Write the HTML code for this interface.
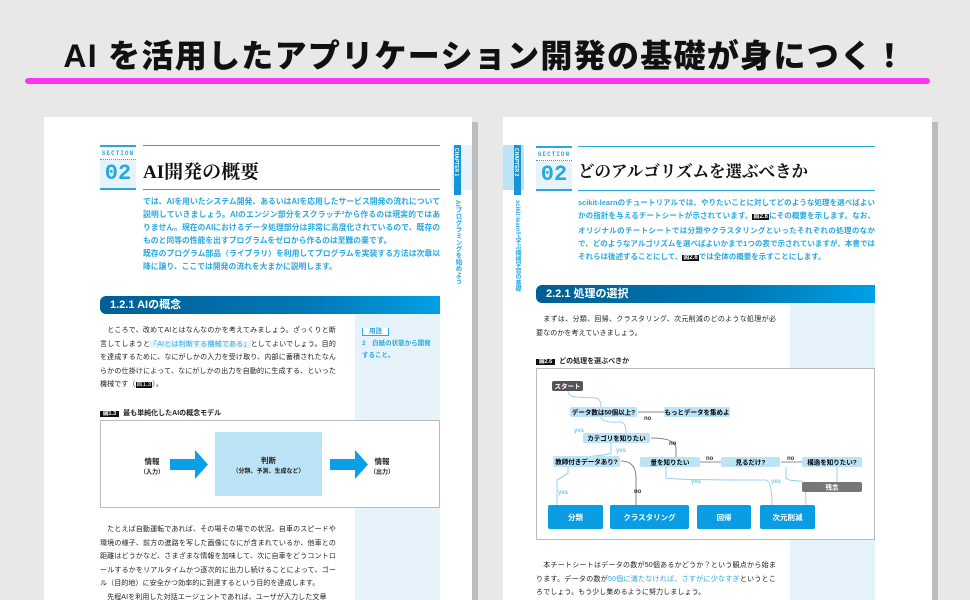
<!DOCTYPE html>
<html><head><meta charset="utf-8"><style>
*{margin:0;padding:0;box-sizing:border-box}
html,body{width:970px;height:600px;overflow:hidden}
body{background:#e8e8e8;position:relative;font-family:"Liberation Sans","Noto Sans CJK JP",sans-serif;color:#222}
.a{position:absolute}
.hd{left:0;top:36px;width:970px;text-align:center;font-size:32px;font-weight:900;letter-spacing:1.3px;color:#111;white-space:nowrap;line-height:40px}
.pink{height:6px;background:#ff33ee;border-radius:3px}
.page{background:#fff;top:117px;height:483px}
.shadow{background:#bcbcbc;top:122px;height:478px;width:6px}
.sec{width:36px;height:45px;border-top:2px solid #29a8e0;border-bottom:2px solid #29a8e0;background:#e6f3fb;text-align:center;color:#29a8e0}
.sec .s{font-size:6px;font-weight:bold;letter-spacing:1px;background:#fff;height:13px;line-height:13px;border-bottom:1px dotted #29a8e0;font-family:"Liberation Mono",monospace}
.sec .n{font-size:22px;font-weight:bold;font-family:"Liberation Mono",monospace;line-height:28px}
.tline{border-top:1.5px solid #29a8e0;border-bottom:1.5px solid #29a8e0;height:45px}
.title{font-family:"Liberation Serif","Noto Serif CJK SC",serif;font-weight:bold;color:#111}
.lead{color:#29a8e0;font-size:7.8px;font-weight:bold;line-height:13px;text-align:justify}
.bar{height:18px;background:linear-gradient(90deg,#005f94,#0077b5 60%,#00a0e6);color:#fff;font-weight:bold;font-size:11px;line-height:18px;padding-left:10px;border-radius:6px 0 0 6px}
.side{background:#e6f3fb}
.body{font-size:7px;line-height:13.5px;color:#222;text-align:justify;letter-spacing:0.1px}
.cap{font-size:7px;font-weight:bold}
.cap b{background:#111;color:#fff;font-size:5.5px;padding:0 3px;margin-right:4px}
.vt{writing-mode:vertical-rl;font-size:6.5px;color:#29a8e0;font-weight:bold}
.hl{background:#e6f3fb;color:#29a8e0}
.ref{background:#111;color:#fff;font-size:6px;padding:0 1px}
</style></head><body>
<div class="a pink" style="left:25px;width:905px;top:78px"></div>
<div class="a hd">AI を活用したアプリケーション開発の基礎が身につく！</div>

<!-- LEFT PAGE -->
<div class="a page" style="left:44px;width:428px"></div>
<div class="a shadow" style="left:472px"></div>
<div class="a sec" style="left:100px;top:145px"><div class="s">SECTION</div><div class="n">02</div></div>
<div class="a tline" style="left:143px;top:145px;width:297px"></div>
<div class="a title" style="left:143px;top:157px;font-size:19px">AI開発の概要</div>
<div class="a side" style="left:452px;top:145px;width:20px;height:45px"></div>
<div class="a" style="left:454px;top:145px;width:7px;height:50px;background:#1595d8"></div>
<div class="a vt" style="left:453px;top:148px;color:#fff;font-size:5px">CHAPTER 1</div>
<div class="a vt" style="left:452px;top:200px">AIプログラミングを始めよう</div>
<div class="a lead" style="left:143px;top:195px;width:297px">では、AIを用いたシステム開発、あるいはAIを応用したサービス開発の流れについて説明していきましょう。AIのエンジン部分をスクラッチ²から作るのは現実的ではありません。現在のAIにおけるデータ処理部分は非常に高度化されているので、既存のものと同等の性能を出すプログラムをゼロから作るのは至難の業です。<br>既存のプログラム部品（ライブラリ）を利用してプログラムを実装する方法は次章以降に譲り、ここでは開発の流れを大まかに説明します。</div>
<div class="a bar" style="left:100px;top:296px;width:340px">1.2.1 AIの概念</div>
<div class="a side" style="left:355px;top:314px;width:85px;height:290px"></div>
<div class="a" style="left:362px;top:326px;font-size:6.5px;color:#29a8e0;font-weight:bold;line-height:12px;width:72px"><span style="border:1px solid #29a8e0;border-top:none;padding:0 6px;background:#fff">用語</span><br>2　白紙の状態から開発すること。</div>
<div class="a body" style="left:100px;top:324px;width:236px">　ところで、改めてAIとはなんなのかを考えてみましょう。ざっくりと断言してしまうと<span class="hl">「AIとは判断する機械である」</span>としてよいでしょう。目的を達成するために、なにがしかの入力を受け取り、内部に蓄積されたなんらかの仕掛けによって、なにがしかの出力を自動的に生成する、といった機械です（<span class="ref">図1.3</span>）。</div>
<div class="a cap" style="left:100px;top:408px"><b>図1.3</b>最も単純化したAIの概念モデル</div>
<div class="a" style="left:100px;top:420px;width:340px;height:88px;border:1px solid #bbb;background:#fff"></div>
<div class="a" style="left:215px;top:432px;width:107px;height:64px;background:#bde3f7;text-align:center;font-size:7.5px;font-weight:bold;padding-top:24px;line-height:10px">判断<br><span style="font-size:6px">（分類、予測、生成など）</span></div>
<div class="a" style="left:140px;top:457px;font-size:7.5px;font-weight:bold;text-align:center;line-height:10px">情報<br><span style="font-size:6px">（入力）</span></div>
<div class="a" style="left:370px;top:457px;font-size:7.5px;font-weight:bold;text-align:center;line-height:10px">情報<br><span style="font-size:6px">（出力）</span></div>
<svg class="a" style="left:170px;top:450px" width="40" height="30"><polygon points="0,9 25,9 25,0 38,14.5 25,29 25,20 0,20" fill="#0aa0e8"/></svg>
<svg class="a" style="left:330px;top:450px" width="40" height="30"><polygon points="0,9 25,9 25,0 38,14.5 25,29 25,20 0,20" fill="#0aa0e8"/></svg>
<div class="a body" style="left:100px;top:523px;width:236px">　たとえば自動運転であれば、その場その場での状況、自車のスピードや環境の様子、前方の進路を写した画像になにが含まれているか、他車との距離はどうかなど、さまざまな情報を加味して、次に自車をどうコントロールするかをリアルタイムかつ逐次的に出力し続けることによって、ゴール（目的地）に安全かつ効率的に到達するという目的を達成します。<br>　先程AIを利用した対話エージェントであれば、ユーザが入力した文章</div>

<!-- RIGHT PAGE -->
<div class="a page" style="left:503px;width:429px"></div>
<div class="a shadow" style="left:932px"></div>
<div class="a side" style="left:503px;top:145px;width:21px;height:45px;background:#bde3f7"></div>
<div class="a" style="left:514px;top:145px;width:7px;height:50px;background:#1595d8"></div>
<div class="a vt" style="left:513px;top:148px;color:#fff;font-size:5px">CHAPTER 2</div>
<div class="a vt" style="left:513px;top:200px;font-size:6px">scikit-learnで学ぶ機械学習の基礎</div>
<div class="a sec" style="left:536px;top:146px"><div class="s">SECTION</div><div class="n">02</div></div>
<div class="a tline" style="left:578px;top:146px;width:297px"></div>
<div class="a title" style="left:578px;top:158px;font-size:16.5px">どのアルゴリズムを選ぶべきか</div>
<div class="a lead" style="left:578px;top:196px;width:297px;font-size:7.5px">scikit-learnのチュートリアルでは、やりたいことに対してどのような処理を選べばよいかの指針を与えるチートシートが示されています。<span class="ref">図2.6</span>にその概要を示します。なお、オリジナルのチートシートでは分類やクラスタリングといったそれぞれの処理のなかで、どのようなアルゴリズムを選べばよいかまで1つの表で示されていますが、本書ではそれらは後述することにして、<span class="ref">図2.6</span>では全体の概要を示すことにします。</div>
<div class="a bar" style="left:536px;top:285px;width:339px">2.2.1 処理の選択</div>
<div class="a side" style="left:790px;top:303px;width:85px;height:300px"></div>
<div class="a body" style="left:536px;top:313px;width:240px">　まずは、分類、回帰、クラスタリング、次元削減のどのような処理が必要なのかを考えていきましょう。</div>
<div class="a cap" style="left:536px;top:356px"><b>図2.6</b>どの処理を選ぶべきか</div>
<svg class="a" style="left:536px;top:368px" width="340" height="173" font-family="Liberation Sans,Noto Sans CJK JP,sans-serif" font-size="6.5" font-weight="bold">
<rect x="0.5" y="0.5" width="338" height="171" fill="#fff" stroke="#bbb"/>
<g fill="none" stroke="#7cc8ef" stroke-width="0.8">
<path d="M32 23 Q32 28 40 29 L60 30 Q65 31 65 39"/>
<path d="M65 49 Q65 53 75 54 L85 54 Q90 55 90 65"/>
<path d="M75 75 L75 85 Q70 88 40 89 Q36 90 36 88"/>
<path d="M32 99 L32 105 Q28 108 21 112 L21 137"/>
<path d="M130 99 L130 110 Q135 112 230 112 Q236 113 236 137"/>
<path d="M250 99 L250 110 Q252 113 265 113 Q270 114 270 137"/>
<path d="M301 99 L301 114"/>
</g>
<g fill="none" stroke="#666" stroke-width="0.8">
<path d="M102 44 L128 44"/>
<path d="M115 70 Q140 70 140 80 L140 89"/>
<path d="M85 93 Q100 93 100 110 L100 137"/>
<path d="M164 94 L185 94"/>
<path d="M245 94 L266 94"/>
</g>
<rect x="16" y="13" width="31" height="10" rx="2" fill="#555"/><text x="31.5" y="20.5" fill="#fff" text-anchor="middle">スタート</text>
<rect x="34" y="39" width="67" height="10" rx="2" fill="#bde3f7"/><text x="67.5" y="46.5" text-anchor="middle">データ数は50個以上?</text>
<rect x="128" y="39" width="66" height="10" rx="2" fill="#bde3f7"/><text x="161" y="46.5" text-anchor="middle">もっとデータを集めよ</text>
<rect x="47" y="65" width="67" height="10" rx="2" fill="#bde3f7"/><text x="80.5" y="72.5" text-anchor="middle">カテゴリを知りたい</text>
<rect x="17" y="88" width="67" height="11" rx="2" fill="#bde3f7"/><text x="50.5" y="96" text-anchor="middle">教師付きデータあり?</text>
<rect x="104" y="89" width="60" height="10" rx="2" fill="#bde3f7"/><text x="134" y="96.5" text-anchor="middle">量を知りたい</text>
<rect x="185" y="89" width="59" height="10" rx="2" fill="#bde3f7"/><text x="214.5" y="96.5" text-anchor="middle">見るだけ?</text>
<rect x="266" y="89" width="60" height="10" rx="2" fill="#bde3f7"/><text x="296" y="96.5" text-anchor="middle">構造を知りたい?</text>
<rect x="266" y="114" width="60" height="10" rx="2" fill="#777"/><text x="296" y="121.5" fill="#fff" text-anchor="middle">残念</text>
<g fill="#0a9de3"><rect x="12" y="137" width="55" height="24" rx="2"/><rect x="74" y="137" width="79" height="24" rx="2"/><rect x="161" y="137" width="54" height="24" rx="2"/><rect x="224" y="137" width="55" height="24" rx="2"/></g>
<g fill="#fff" font-size="7.5" text-anchor="middle"><text x="39.5" y="152">分類</text><text x="113.5" y="152">クラスタリング</text><text x="188" y="152">回帰</text><text x="251.5" y="152">次元削減</text></g>
<g fill="#7cc8ef" font-size="6"><text x="38" y="64">yes</text><text x="80" y="84">yes</text><text x="22" y="126">yes</text><text x="155" y="115">yes</text><text x="235" y="115">yes</text></g>
<g fill="#333" font-size="6"><text x="108" y="52">no</text><text x="133" y="77">no</text><text x="98" y="125">no</text><text x="170" y="92">no</text><text x="251" y="92">no</text></g>
</svg>
<div class="a body" style="left:536px;top:559px;width:240px">　本チートシートはデータの数が50個あるかどうか？という観点から始まります。データの数が<span style="color:#29a8e0">50個に満たなければ、さすがに少なすぎ</span>というところでしょう。もう少し集めるように努力しましょう。</div>
</body></html>
